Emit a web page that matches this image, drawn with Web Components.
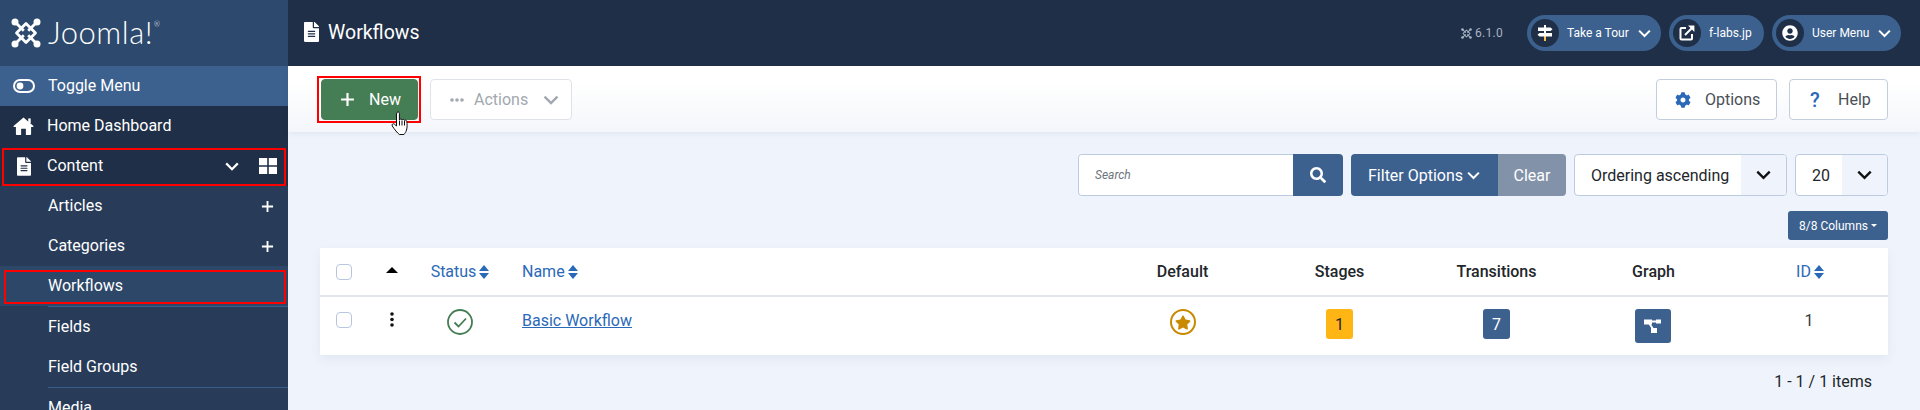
<!DOCTYPE html>
<html lang="en">
<head>
<meta charset="utf-8">
<title>Workflows</title>
<style>
  html, body { margin: 0; height: 410px; overflow: hidden; }
  body { font-family: Roboto, "Liberation Sans", sans-serif; font-size: 16px; color: #22262a; background: #eff4fc; }
</style>
</head>
<body>
<jm-app>
  <jm-sidebar slot="side">
    <jm-nav-item icon="toggle" variant="toggle">Toggle Menu</jm-nav-item>
    <jm-nav-item icon="home" variant="dark">Home Dashboard</jm-nav-item>
    <jm-nav-item icon="file" variant="dark" extra="dash" marked>Content</jm-nav-item>
    <jm-nav-item variant="sub" extra="plus">Articles</jm-nav-item>
    <jm-nav-item variant="sub" extra="plus">Categories</jm-nav-item>
    <jm-nav-item variant="current" marked>Workflows</jm-nav-item>
    <jm-nav-item variant="sub" rule>Fields</jm-nav-item>
    <jm-nav-item variant="sub">Field Groups</jm-nav-item>
    <jm-nav-item variant="sub" rule>Media</jm-nav-item>
  </jm-sidebar>
  <jm-header slot="main" page-title="Workflows">
    <jm-pill icon="sign" width="134" caret>Take a Tour</jm-pill>
    <jm-pill icon="link" width="95">f-labs.jp</jm-pill>
    <jm-pill icon="user" width="129" caret>User Menu</jm-pill>
  </jm-header>
  <jm-toolbar slot="main"></jm-toolbar>
  <jm-filters slot="main"></jm-filters>
  <jm-workflow-table slot="main"></jm-workflow-table>
</jm-app>

<script>
// shared svg bits
const ICONS = {
  file: '<svg viewBox="0 0 384 512"><path fill="currentColor" d="M224 136V0H24C10.7 0 0 10.7 0 24v464c0 13.3 10.7 24 24 24h336c13.3 0 24-10.7 24-24V160H248c-13.2 0-24-10.8-24-24zm64 236c0 6.6-5.4 12-12 12H108c-6.6 0-12-5.4-12-12v-8c0-6.6 5.4-12 12-12h168c6.6 0 12 5.4 12 12v8zm0-64c0 6.6-5.4 12-12 12H108c-6.6 0-12-5.4-12-12v-8c0-6.6 5.4-12 12-12h168c6.6 0 12 5.4 12 12v8zm0-72v8c0 6.6-5.4 12-12 12H108c-6.6 0-12-5.4-12-12v-8c0-6.6 5.4-12 12-12h168c6.6 0 12 5.4 12 12zm96-114.1v6.1H256V0h6.1c6.4 0 12.5 2.5 17 7l97.9 98c4.5 4.5 7 10.6 7 16.9z"/></svg>',
  home: '<svg viewBox="0 0 22 19"><path fill="currentColor" d="M11 .5l10.5 9q.5 1.100-.7 1.100H19V18a1 1 0 0 1-1 1h-4.500v-6.500h-5V19H4a1 1 0 0 1-1-1v-7.400H1.200Q0 10.600.5 9.500z"/><rect x="16" y="1.500" width="2.600" height="5" fill="currentColor"/></svg>',
  toggle: '<svg viewBox="0 0 22 14"><rect x="1" y="1" width="20" height="12" rx="6" fill="none" stroke="currentColor" stroke-width="2"/><circle cx="7" cy="7" r="3.4" fill="currentColor"/></svg>',
  cog: '<svg viewBox="0 0 512 512"><path fill="currentColor" d="M487.4 315.7l-42.6-24.6c4.3-23.2 4.3-47 0-70.2l42.6-24.6c4.9-2.8 7.1-8.6 5.5-14-11.1-35.6-30-67.8-54.7-94.6-3.8-4.1-10-5.1-14.8-2.3L380.8 110c-17.9-15.4-38.5-27.3-60.8-35.1V25.8c0-5.6-3.9-10.5-9.4-11.7-36.7-8.2-74.3-7.8-109.2 0-5.5 1.2-9.4 6.1-9.4 11.7V75c-22.2 7.9-42.8 19.8-60.8 35.1L88.7 85.5c-4.9-2.8-11-1.9-14.8 2.3-24.7 26.7-43.6 58.9-54.7 94.6-1.7 5.4.6 11.2 5.5 14L67.3 221c-4.3 23.2-4.3 47 0 70.2l-42.6 24.6c-4.9 2.8-7.1 8.6-5.5 14 11.1 35.6 30 67.8 54.7 94.6 3.8 4.1 10 5.1 14.8 2.3l42.6-24.6c17.9 15.4 38.5 27.3 60.8 35.1v49.2c0 5.6 3.9 10.5 9.4 11.7 36.7 8.2 74.3 7.8 109.2 0 5.5-1.2 9.4-6.1 9.4-11.7v-49.2c22.2-7.9 42.8-19.8 60.8-35.1l42.6 24.6c4.9 2.8 11 1.9 14.8-2.3 24.7-26.7 43.6-58.9 54.7-94.6 1.5-5.5-.7-11.3-5.6-14.1zM256 336c-44.1 0-80-35.9-80-80s35.9-80 80-80 80 35.9 80 80-35.9 80-80 80z"/></svg>',
  search: '<svg viewBox="0 0 512 512"><path fill="currentColor" d="M505 442.7L405.3 343c-4.5-4.5-10.6-7-17-7H372c27.6-35.3 44-79.7 44-128C416 93.1 322.9 0 208 0S0 93.1 0 208s93.1 208 208 208c48.3 0 92.7-16.4 128-44v16.3c0 6.4 2.5 12.5 7 17l99.7 99.7c9.4 9.4 24.6 9.4 33.9 0l28.3-28.3c9.4-9.4 9.4-24.6.1-34zM208 336c-70.7 0-128-57.2-128-128 0-70.7 57.2-128 128-128 70.7 0 128 57.2 128 128 0 70.7-57.2 128-128 128z"/></svg>',
  star: '<svg viewBox="0 0 576 512"><path fill="currentColor" d="M259.3 17.8L194 150.2 47.9 171.5c-26.2 3.8-36.7 36.1-17.7 54.6l105.7 103-25 145.5c-4.5 26.3 23.2 46 46.4 33.7L288 439.6l130.7 68.7c23.2 12.2 50.9-7.4 46.4-33.7l-25-145.5 105.7-103c19-18.5 8.5-50.8-17.7-54.6L382 150.2 316.7 17.8c-11.7-23.6-45.6-23.9-57.4 0z"/></svg>',
  user: '<svg viewBox="0 0 496 512"><path fill="currentColor" d="M248 8C111 8 0 119 0 256s111 248 248 248 248-111 248-248S385 8 248 8zm0 96c48.6 0 88 39.4 88 88s-39.4 88-88 88-88-39.4-88-88 39.4-88 88-88zm0 344c-58.7 0-111.3-26.6-146.5-68.2 18.8-35.4 55.6-59.8 98.5-59.8 2.4 0 4.8.4 7.1 1.1 13 4.2 26.6 6.9 40.9 6.9 14.3 0 28-2.7 40.9-6.9 2.3-.7 4.7-1.1 7.1-1.1 42.9 0 79.7 24.4 98.5 59.8C359.3 421.4 306.7 448 248 448z"/></svg>',
  link: '<svg viewBox="0 0 16 16"><path fill="none" stroke="currentColor" stroke-width="2" d="M7 3H2.500a1 1 0 0 0-1 1v9.500a1 1 0 0 0 1 1H12a1 1 0 0 0 1-1V9"/><path fill="none" stroke="currentColor" stroke-width="2" d="M6 10l8-8"/><path fill="currentColor" d="M9 .6h6.400V7z"/></svg>',
  sign: '<svg viewBox="0 0 16 16"><rect x="7" y="0" width="2" height="11" fill="currentColor"/><rect x="7" y="11" width="2" height="5" fill="#ffc14d"/><path fill="currentColor" d="M1 2.500h12.500l2 1.750-2 1.750H1zM15 8H2.500l-2 1.750 2 1.750H15z"/></svg>',
  chevron: '<svg viewBox="0 0 14 9"><path fill="none" stroke="currentColor" stroke-width="2.200" d="M1.200 1.400L7 7.200l5.800-5.800"/></svg>',
  plus: '<svg viewBox="0 0 14 14"><path fill="none" stroke="currentColor" stroke-width="2" d="M7 1v12M1 7h12"/></svg>',
  dash: '<svg viewBox="0 0 18 16"><path fill="currentColor" d="M0 0h8.200v7.200H0zM9.800 0H18v7.200H9.800zM0 8.800h8.200V16H0zM9.800 8.800H18V16H9.800z"/></svg>',
  sort: '<svg viewBox="0 0 10 14"><path fill="currentColor" d="M5 0l5 6H0zM5 14L0 8h10z"/></svg>',
  joomla: '<svg viewBox="0 0 30 30"><g fill="none" stroke="currentColor" stroke-width="2.800" stroke-linejoin="round"><path d="M15 5.500L24.500 15 15 24.500 5.500 15z"/><path d="M4 4l8.800 8.800M26 4l-8.800 8.800M4 26l8.800-8.800M26 26l-8.800-8.800"/></g><circle cx="4" cy="4" r="3.500" fill="currentColor"/><circle cx="26" cy="4" r="3.500" fill="currentColor"/><circle cx="4" cy="26" r="3.500" fill="currentColor"/><circle cx="26" cy="26" r="3.500" fill="currentColor"/></svg>',
  graph: '<svg viewBox="0 0 17 14"><path fill="currentColor" d="M0 .5h8v5H0zM12 .5h5v4h-5zM7 9h6v5H7z"/><path fill="none" stroke="currentColor" stroke-width="2" d="M6 2.500h7M5 4l4 6"/></svg>'
};

class JmApp extends HTMLElement {
  constructor() {
    super();
    this.attachShadow({ mode: "open" }).innerHTML = `
      <style>
        :host { display: flex; width: 1920px; height: 410px; overflow: hidden; }
        .side { flex: 0 0 288px; }
        .main { flex: 1; min-width: 0; display: flex; flex-direction: column; }
      </style>
      <div class="side"><slot name="side"></slot></div>
      <div class="main"><slot name="main"></slot></div>`;
  }
}

class JmSidebar extends HTMLElement {
  constructor() {
    super();
    this.attachShadow({ mode: "open" }).innerHTML = `
      <style>
        :host { display: block; width: 288px; height: 410px; background: #283c5a; overflow: hidden; }
        .brand { height: 66px; background: #2d4a6e; color: #fff; display: flex; align-items: center; padding: 0 0 0 11px; box-sizing: border-box; gap: 7px; }
        .brand svg { width: 30px; height: 30px; }
        .word { font-family: Lato, sans-serif; font-weight: 300; font-size: 31px; line-height: 1; letter-spacing: .5px; margin-top: -2px; }
        sup { font-size: 7px; vertical-align: 17px; line-height: 0; margin-left: 1px; }
      </style>
      <div class="brand">${ICONS.joomla}<span class="word">Joomla!<sup>®</sup></span></div>
      <slot></slot>`;
  }
}

class JmNavItem extends HTMLElement {
  constructor() {
    super();
    const icon = this.getAttribute("icon");
    const extra = this.getAttribute("extra");
    const variant = this.getAttribute("variant") || "sub";
    const ic = icon ? `<span class="ic ${icon}">${ICONS[icon]}</span>` : "";
    let ex = "";
    if (extra === "plus") ex = `<span class="plus">${ICONS.plus}</span>`;
    if (extra === "dash") ex = `<span class="chev">${ICONS.chevron}</span><span class="dash">${ICONS.dash}</span>`;
    this.attachShadow({ mode: "open" }).innerHTML = `
      <style>
        :host { display: block; color: #fff; font-size: 16px; }
        .row { position: relative; height: 40px; display: flex; align-items: center; box-sizing: border-box; }
        .row.toggle { background: #3c618f; }
        .row.dark { background: #1f2f47; }
        .row.current { background: #2d4769; }
        .ic { width: 47px; display: flex; justify-content: center; flex: none; box-sizing: border-box; }
        .ic.toggle { width: 48px; }
        .ic svg { display: block; }
        .toggle svg { width: 22px; height: 14px; }
        .home svg { width: 21px; height: 18px; }
        .file svg { width: 14px; height: 19px; }
        .label { flex: 1; margin-top: -1px; }
        .row.sub .label, .row.current .label { padding-left: 48px; }
        .row.rule::before { content: ""; position: absolute; left: 48px; right: 0; top: -1px; height: 1px; background: #3c5f8a; }
        .plus { width: 13px; height: 13px; margin-right: 14px; display: block; }
        .plus svg, .chev svg, .dash svg { display: block; width: 100%; height: 100%; }
        .chev { width: 14px; height: 9px; margin-right: 20px; }
        .dash { width: 18px; height: 16px; margin-right: 11px; }
        .mark { position: absolute; border: 2px solid #f00; pointer-events: none; }
        .dark .mark { left: 2px; right: 2px; top: 2px; bottom: 0; }
        .current .mark { left: 4px; right: 2px; top: 4px; bottom: 2px; }
      </style>
      <div class="row ${variant}">${ic}<span class="label"><slot></slot></span>${ex}${this.hasAttribute("marked") ? '<span class="mark"></span>' : ""}</div>`;
    if (this.hasAttribute("rule")) {
      this.shadowRoot.querySelector(".row").classList.add("rule");
      this.style.marginTop = "1px";
    }
  }
}

class JmHeader extends HTMLElement {
  constructor() {
    super();
    this.attachShadow({ mode: "open" }).innerHTML = `
      <style>
        :host { display: flex; flex: none; height: 66px; background: #1f2f47; color: #fff; align-items: center; padding: 0 19px 0 16px; box-sizing: border-box; }
        .file { width: 15px; height: 20px; margin-right: 9px; margin-top: -2px; }
        .file svg, .j svg { display: block; width: 100%; height: 100%; }
        h1 { margin: 0; flex: 1; font-size: 19.5px; font-weight: 450; line-height: 1; margin-top: -1px; }
        .ver { display: flex; align-items: center; color: #a9b4c4; font-size: 12px; margin-right: 24px; gap: 3px; letter-spacing: .3px; }
        .j { width: 11px; height: 11px; }
        .pills { display: flex; gap: 8px; }
      </style>
      <span class="file">${ICONS.file}</span>
      <h1>${this.getAttribute("page-title")}</h1>
      <span class="ver"><span class="j">${ICONS.joomla}</span>6.1.0</span>
      <div class="pills"><slot></slot></div>`;
  }
}

class JmPill extends HTMLElement {
  constructor() {
    super();
    const icon = this.getAttribute("icon");
    this.attachShadow({ mode: "open" }).innerHTML = `
      <style>
        :host { display: flex; align-items: center; height: 36px; border-radius: 18px; background: #3c618f; color: #fff; font-size: 12px; font-weight: 450; box-sizing: border-box; padding-left: 4px; width: ${this.getAttribute("width")}px; }
        .c { width: 28px; height: 28px; border-radius: 50%; background: #1f2f47; display: flex; align-items: center; justify-content: center; flex: none; margin-right: 8px; }
        .c svg { width: 16px; height: 16px; display: block; }
        .t { flex: 1; white-space: nowrap; }
        .caret { width: 13px; height: 9px; margin-right: 10px; }
        .caret svg { display: block; width: 100%; height: 100%; }
      </style>
      <span class="c">${ICONS[icon]}</span><span class="t"><slot></slot></span>
      ${this.hasAttribute("caret") ? `<span class="caret">${ICONS.chevron}</span>` : ""}`;
  }
}

class JmToolbar extends HTMLElement {
  constructor() {
    super();
    this.attachShadow({ mode: "open" }).innerHTML = `
      <style>
        :host { display: flex; flex: none; height: 66px; box-sizing: border-box; padding: 13px 32px 0 33px; gap: 12px; background: linear-gradient(#fff 25%, #f4f6fb); box-shadow: 0 2px 6px rgba(40,60,90,.07); position: relative; }
        .btn { height: 41px; box-sizing: border-box; display: flex; align-items: center; border-radius: 4px; font-size: 16px; border: 1px solid #c4cddb; background: #fff; color: #495057; }
        .btn svg { display: block; }
        .new { position: relative; width: 97px; background: #457d54; border-color: #457d54; color: #fff; font-weight: 450; padding-left: 18px; gap: 14px; }
        .new svg { width: 15px; height: 15px; }
        .new::after { content: ""; position: absolute; left: -5px; top: -4px; width: 100px; height: 43px; border: 2px solid #f00; pointer-events: none; }
        .act { width: 142px; color: #a2a8b0; border-color: #dfe3e9; padding-left: 19px; }
        .act .dots { width: 14px; height: 4px; margin-right: 10px; }
        .act .chev { width: 16px; height: 10px; margin-left: 15px; color: #a2a8b0; }
        .chev svg { width: 100%; height: 100%; }
        .sp { flex: 1; }
        .opt { width: 121px; padding-left: 18px; }
        .opt svg { width: 16px; height: 16px; margin-right: 14px; color: #2a69b8; }
        .help { width: 99px; padding-left: 20px; }
        .help b { color: #2a69b8; font-weight: 500; font-size: 20px; margin-right: 18px; width: 10px; }
        .hand { position: absolute; left: 103px; top: 45px; width: 19px; height: 25px; }
      </style>
      <div class="btn new">${ICONS.plus}<span>New</span></div>
      <div class="btn act">
        <svg class="dots" viewBox="0 0 14 4"><g fill="currentColor"><circle cx="2" cy="2" r="1.800"/><circle cx="7" cy="2" r="1.800"/><circle cx="12" cy="2" r="1.800"/></g></svg>
        <span>Actions</span><span class="chev">${ICONS.chevron}</span></div>
      <span class="sp"></span>
      <div class="btn opt">${ICONS.cog}<span>Options</span></div>
      <div class="btn help"><b>?</b><span>Help</span></div>
      <svg class="hand" viewBox="0 0 19 25"><path fill="#fff" stroke="#111" stroke-width="1" stroke-linejoin="round" d="M6 1.500c1-1 2.400-.4 2.400 1V9c.3-1.300 2.300-1.300 2.600 0 .5-1 2.300-.8 2.500.4.7-.7 2.200-.2 2.300 1 .4 3 .5 6-.3 8.600-.5 2-1.500 3-2.500 4.500H8.300C6.500 22 3.500 18.500 1.300 15c-1-1.500.8-3 2.200-1.800L5.500 15V3z"/><path stroke="#111" fill="none" d="M8.500 9.500v5M11 9.500v5M13.500 10v4.500"/></svg>`;
  }
}

class JmFilters extends HTMLElement {
  constructor() {
    super();
    this.attachShadow({ mode: "open" }).innerHTML = `
      <style>
        :host { display: block; flex: none; padding: 22px 32px 0; }
        .bar { display: flex; justify-content: flex-end; gap: 8px; height: 42px; }
        .group { display: flex; border-radius: 4px; overflow: hidden; box-sizing: border-box; height: 42px; align-items: stretch; }
        .search { width: 265px; }
        .input { flex: 1; background: #fff; border: 1px solid #bccbe0; border-right: 0; border-radius: 4px 0 0 4px; font-size: 12px; font-style: italic; color: #6d757e; display: flex; align-items: center; padding-left: 16px; }
        .sbtn { width: 50px; background: #3c618f; color: #fff; display: flex; align-items: center; justify-content: center; }
        .sbtn svg { width: 16px; height: 16px; }
        .fo { width: 147px; background: #3c618f; color: #fff; display: flex; align-items: center; font-size: 16px; font-weight: 450; padding-left: 17px; box-sizing: border-box; gap: 4px; white-space: nowrap; }
        .fo span { width: 13px; height: 9px; }
        .fo svg { display: block; width: 100%; height: 100%; }
        .clear { width: 68px; background: #8292a9; color: #fff; font-size: 16px; font-weight: 450; display: flex; align-items: center; justify-content: center; }
        .sel { background: #fff; border: 1px solid #bccbe0; font-size: 16px; color: #22262a; display: flex; align-items: center; }
        .sel .v { flex: 1; padding-left: 16px; white-space: nowrap; }
        .sel .a { background: #eff4fc; align-self: stretch; display: flex; align-items: center; justify-content: center; color: #111; }
        .sel .a svg { width: 15px; height: 10px; display: block; }
        .o { width: 213px; } .o .a { width: 45px; }
        .n { width: 93px; } .n .a { width: 45px; }
        .cols { display: flex; justify-content: flex-end; margin-top: 15px; }
        .cols div { width: 100px; height: 29px; background: #3c618f; color: #fff; border-radius: 3px; font-size: 12px; font-weight: 450; display: flex; align-items: center; justify-content: center; gap: 3px; }
        .cols i { border-top: 3px solid #fff; border-left: 3px solid transparent; border-right: 3px solid transparent; }
      </style>
      <div class="bar">
        <div class="group search"><div class="input">Search</div><div class="sbtn">${ICONS.search}</div></div>
        <div class="group"><div class="fo">Filter Options <span>${ICONS.chevron}</span></div><div class="clear">Clear</div></div>
        <div class="group sel o"><span class="v">Ordering ascending</span><span class="a">${ICONS.chevron}</span></div>
        <div class="group sel n"><span class="v">20</span><span class="a">${ICONS.chevron}</span></div>
      </div>
      <div class="cols"><div>8/8 Columns <i></i></div></div>`;
  }
}

class JmWorkflowTable extends HTMLElement {
  constructor() {
    super();
    const sort = `<span class="s">${ICONS.sort}</span>`;
    this.attachShadow({ mode: "open" }).innerHTML = `
      <style>
        :host { display: block; flex: none; margin: 8px 32px 0; font-size: 16px; }
        .card { background: #fff; box-shadow: 0 4px 10px rgba(40,60,90,.07); }
        .r { display: grid; grid-template-columns: 48px 47px 90px 599px repeat(4, 157px) 156px; box-sizing: border-box; }
        .r.h { height: 49px; border-bottom: 2px solid #e1e4ec; font-weight: 500; color: #22262a; }
        .r.b { height: 58px; }
        .c { display: flex; align-items: center; justify-content: center; }
        .b .c { align-items: flex-start; padding-top: 12px; box-sizing: border-box; }
        .l { justify-content: flex-start; padding-left: 17px; }
        .blue { color: #2a69b8; gap: 3px; font-weight: 450; }
        .s { width: 10px; height: 14px; display: block; }
        .s svg { display: block; width: 100%; height: 100%; }
        .chk { width: 16px; height: 16px; border: 1px solid #b7c7de; border-radius: 4px; box-sizing: border-box; background: #fff; }
        .h .chk { margin-top: 1px; }
        .b .chk { margin-top: 3px; }
        .up { width: 0; height: 0; border-left: 6px solid transparent; border-right: 6px solid transparent; border-bottom: 6px solid #000; margin-bottom: 4px; }
        .dots { display: block; margin-top: 3px; width: 4px; height: 15px; }
        a { color: #2a69b8; text-decoration: underline; font-size: 16px; font-weight: 450; margin-top: 2px; }
        .ok { display: block; width: 26px; height: 26px; }
        .star { width: 26px; height: 26px; box-sizing: border-box; border: 2px solid #c98a00; border-radius: 50%; color: #c98a00; display: flex; align-items: center; justify-content: center; }
        .star svg { width: 16px; height: 15px; display: block; }
        .badge { width: 27px; height: 30px; border-radius: 3px; display: flex; align-items: center; justify-content: center; font-size: 16px; }
        .y { background: #ffb514; color: #22262a; }
        .d { background: #3c618f; color: #fff; }
        .g { width: 36px; height: 34px; margin-right: 2px; }
        .g svg { width: 17px; height: 14px; display: block; }
        .id { font-size: 16px; color: #343a40; margin-top: 2px; margin-right: 2px; }
        .foot { text-align: right; padding: 18px 16px 0 0; font-size: 16px; line-height: 18px; color: #22262a; }
      </style>
      <div class="card">
        <div class="r h">
          <div class="c"><span class="chk"></span></div>
          <div class="c"><span class="up"></span></div>
          <div class="c blue">Status ${sort}</div>
          <div class="c l blue">Name ${sort}</div>
          <div class="c">Default</div><div class="c">Stages</div><div class="c">Transitions</div><div class="c">Graph</div>
          <div class="c blue">ID ${sort}</div>
        </div>
        <div class="r b">
          <div class="c"><span class="chk"></span></div>
          <div class="c"><svg class="dots" viewBox="0 0 4 15"><g fill="#111"><circle cx="2" cy="2" r="1.800"/><circle cx="2" cy="7.500" r="1.800"/><circle cx="2" cy="13" r="1.800"/></g></svg></div>
          <div class="c"><svg class="ok" viewBox="0 0 26 26"><circle cx="13" cy="13" r="12" fill="none" stroke="#457d54" stroke-width="1.800"/><path d="M7.500 13.500l4 4 7.500-8" fill="none" stroke="#457d54" stroke-width="1.800"/></svg></div>
          <div class="c l"><a>Basic Workflow</a></div>
          <div class="c"><span class="star">${ICONS.star}</span></div>
          <div class="c"><span class="badge y">1</span></div>
          <div class="c"><span class="badge d">7</span></div>
          <div class="c"><span class="badge d g">${ICONS.graph}</span></div>
          <div class="c"><span class="id">1</span></div>
        </div>
      </div>
      <div class="foot">1 - 1 / 1 items</div>`;
  }
}

customElements.define("jm-app", JmApp);
customElements.define("jm-sidebar", JmSidebar);
customElements.define("jm-nav-item", JmNavItem);
customElements.define("jm-header", JmHeader);
customElements.define("jm-pill", JmPill);
customElements.define("jm-toolbar", JmToolbar);
customElements.define("jm-filters", JmFilters);
customElements.define("jm-workflow-table", JmWorkflowTable);
</script>
</body>
</html>
